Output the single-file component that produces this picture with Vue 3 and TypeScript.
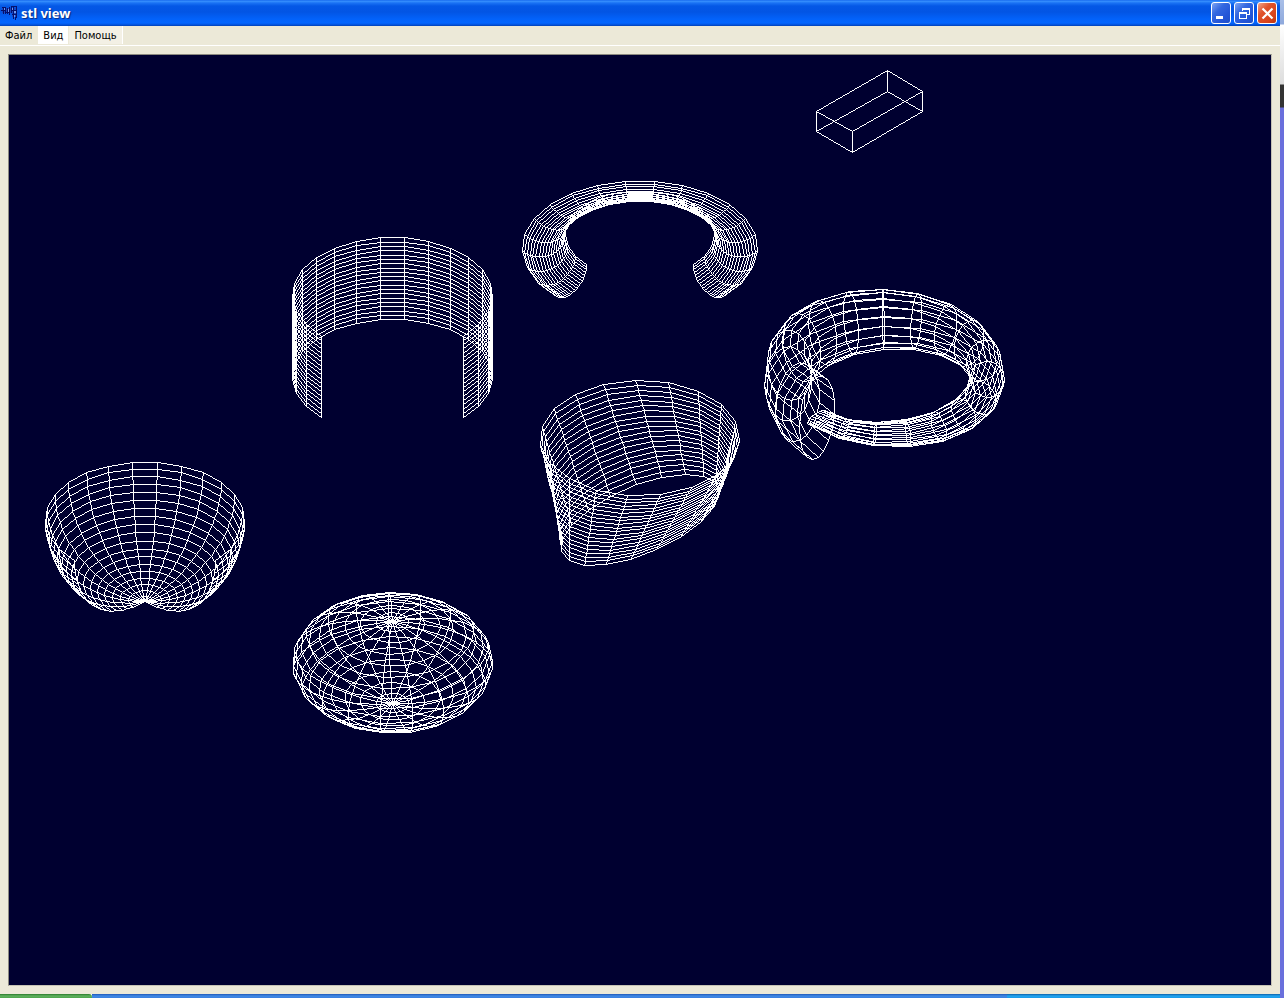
<script setup lang="ts">
type Point = [number, number]
type Surface = (u: number, v: number) => Point

// Side length of every surface grid, in nodes.
const NODES = 20
const TURN = Math.PI * 2
const COS45 = Math.SQRT1_2
const RISE = Math.sqrt(1 / 6)
const LIFT = Math.sqrt(2 / 3)

const menu: { label: string; kind: string }[] = [
  { label: 'Файл', kind: '' },
  { label: 'Вид', kind: 'active' },
  { label: 'Помощь', kind: 'raised' },
]

// Isometric projection: x runs to the front left, y to the front right, z up.
function project(origin: Point, x: number, y: number, z: number): Point {
  return [origin[0] + (y - x) * COS45, origin[1] + (x + y) * RISE - z * LIFT]
}

// One-pixel line between two points, kept as cells of a set.
function line(cells: Set<number>, a: Point, b: Point) {
  let x = Math.round(a[0])
  let y = Math.round(a[1])
  const ex = Math.round(b[0])
  const ey = Math.round(b[1])
  const dx = Math.abs(ex - x)
  const dy = -Math.abs(ey - y)
  const sx = x < ex ? 1 : -1
  const sy = y < ey ? 1 : -1
  let err = dx + dy
  for (;;) {
    cells.add(y * 4096 + x)
    if (x === ex && y === ey) break
    const e2 = err * 2
    if (e2 >= dy) {
      err += dy
      x += sx
    }
    if (e2 <= dx) {
      err += dx
      y += sy
    }
  }
}

// Joins neighbouring cells into horizontal runs.
function toPath(cells: Set<number>): string {
  const sorted = [...cells].sort((a, b) => a - b)
  let d = ''
  let i = 0
  while (i < sorted.length) {
    let n = 1
    while (sorted[i + n] === sorted[i] + n) n++
    d += `M${sorted[i] % 4096} ${Math.floor(sorted[i] / 4096)}h${n}v1h-${n}z`
    i += n
  }
  return d
}

function mesh(surface: Surface): string {
  const cells = new Set<number>()
  const last = NODES - 1
  for (let i = 0; i < NODES; i++) {
    for (let j = 0; j < NODES; j++) {
      const p = surface(i / last, j / last)
      if (i < last) line(cells, p, surface((i + 1) / last, j / last))
      if (j < last) line(cells, p, surface(i / last, (j + 1) / last))
    }
  }
  return toPath(cells)
}

function cell(column: number, row: number): Point {
  return [135.5 + column * 247.5, 35.6 + row * 142.9]
}

// Three quarters of a turn, open towards the viewer.
function openTurn(u: number): number {
  return Math.PI / 2 + u * TURN * 0.75
}

function cylinder(origin: Point): string {
  return mesh((u, v) => {
    const a = openTurn(u)
    return project(origin, 100 * Math.cos(a), 100 * Math.sin(a), 100 * v)
  })
}

function bowl(origin: Point): string {
  return mesh((u, v) => {
    const a = openTurn(u)
    const b = (v * Math.PI) / 2
    const r = 100 * Math.cos(b)
    return project(origin, r * Math.cos(a), r * Math.sin(a), -100 * Math.sin(b))
  })
}

function gutter(origin: Point): string {
  return mesh((u, v) => {
    const a = openTurn(u)
    const b = Math.PI + v * Math.PI * 0.75
    const r = 100 + 25 * Math.cos(b)
    return project(origin, r * Math.cos(a), r * Math.sin(a), 25 * Math.sin(b))
  })
}

function ellipsoid(origin: Point): string {
  return mesh((u, v) => {
    const a = u * TURN
    const b = (v - 0.5) * Math.PI
    const r = 100 * Math.cos(b)
    return project(origin, r * Math.cos(a), r * Math.sin(a), 50 * Math.sin(b))
  })
}

function funnel(origin: Point): string {
  return mesh((u, v) => {
    const a = u * TURN
    return project(origin, 100 * Math.cos(a), (50 + 50 * v) * Math.sin(a), 100 * v)
  })
}

function horn(origin: Point): string {
  return mesh((u, v) => {
    const a = u * TURN
    const b = v * TURN
    const r = 100 + (12.5 + 12.5 * u) * Math.cos(b)
    return project(origin, r * Math.cos(a), r * Math.sin(a), (6.25 + 43.75 * u) * Math.sin(b))
  })
}

function box(origin: Point): string {
  const cells = new Set<number>()
  const base: Point[] = [[0, 0], [100, 0], [100, 50], [0, 50]]
  base.forEach(([x, y], i) => {
    const [nx, ny] = base[(i + 1) % 4]
    line(cells, project(origin, x, y, 0), project(origin, nx, ny, 0))
    line(cells, project(origin, x, y, 25), project(origin, nx, ny, 25))
    line(cells, project(origin, x, y, 0), project(origin, x, y, 25))
  })
  return toPath(cells)
}

const solids: { name: string; d: string }[] = [
  { name: 'box', d: box(cell(3, 0)) },
  { name: 'gutter', d: gutter(cell(2, 1)) },
  { name: 'cylinder', d: cylinder(cell(1, 2)) },
  { name: 'horn', d: horn(cell(3, 2)) },
  { name: 'bowl', d: bowl(cell(0, 3)) },
  { name: 'funnel', d: funnel(cell(2, 3)) },
  { name: 'ellipsoid', d: ellipsoid(cell(1, 4)) },
]
</script>

<template>
  <div class="desktop">
    <div class="window">
      <header class="titlebar">
        <svg class="app-icon" width="18" height="18" viewBox="0 0 18 18" shape-rendering="crispEdges" aria-hidden="true">
          <path d="M2 4h15v5h-15zM12 9h5v4h-5z" fill="#1747c4" />
          <path d="M2 3h4v1h-4zM3 3h1v7h-1zM1 6h5v1h-5zM5 4h1v6h-1zM7 4h1v6h-1zM6 8h4v1h-4zM9 3h1v8h-1zM11 2h6v1h-6zM11 3h1v6h-1zM13 2h1v10h-1zM16 2h1v12h-1zM11 6h6v1h-6zM12 10h4v1h-4zM13 12h1v3h-1zM15 13h1v3h-1z" fill="#06106c" />
          <path d="M4 4h1v2h-1zM8 5h1v3h-1zM12 4h1v2h-1zM14 7h2v2h-2zM14 11h1v2h-1z" fill="#6f97ee" />
        </svg>
        <h1>stl view</h1>
        <button class="control" type="button" aria-label="Свернуть">
          <svg width="19" height="19" viewBox="0 0 19 19" aria-hidden="true"><path d="M4 12h7v3H4z" fill="#fff" /></svg>
        </button>
        <button class="control" type="button" aria-label="Восстановить">
          <svg width="19" height="19" viewBox="0 0 19 19" shape-rendering="crispEdges" aria-hidden="true">
            <path d="M7 4h8v7h-3v-1h2V6H8v1H7zM4 8h8v7H4zM5 10v4h6v-4z" fill="#fff" fill-rule="evenodd" />
          </svg>
        </button>
        <button class="control close" type="button" aria-label="Закрыть">
          <svg width="19" height="19" viewBox="0 0 19 19" aria-hidden="true"><path d="M4.500 4.500l10 10M14.500 4.500l-10 10" stroke="#fff" stroke-width="2.200" /></svg>
        </button>
      </header>
      <nav class="menubar">
        <button v-for="item in menu" :key="item.label" type="button" :class="item.kind">{{ item.label }}</button>
      </nav>
      <main>
        <svg class="scene" shape-rendering="crispEdges" role="img" aria-label="stl">
          <path v-for="solid in solids" :key="solid.name" :d="solid.d" fill="#fff" />
        </svg>
      </main>
    </div>
    <aside class="behind"></aside>
    <footer class="taskbar">
      <span class="start"></span>
      <span class="tasks"></span>
      <span class="tray"></span>
    </footer>
  </div>
</template>

<style>
html,
body {
  margin: 0;
  overflow: hidden;
}
</style>

<style scoped>
.desktop {
  display: grid;
  grid-template-columns: 1fr 4px;
  grid-template-rows: 1fr 4px;
  height: 100vh;
  font-family: 'DejaVu Sans Condensed', 'DejaVu Sans', sans-serif;
  font-size: 11px;
}
.window {
  display: flex;
  flex-direction: column;
  min-width: 0;
  background: #ece9d8;
}
.titlebar {
  display: flex;
  align-items: center;
  gap: 3px;
  height: 26px;
  box-sizing: border-box;
  padding-right: 3px;
  background: linear-gradient(#0a5be8 0, #3a93ff 1px, #1a72f4 3px, #0458e6 6px, #0355e4 12px, #0362fa 19px, #0366fe 23px, #0350d8 25px, #0140b0 26px);
}
.app-icon {
  flex: none;
}
h1 {
  flex: 1;
  margin: 0;
  color: #fff;
  font: bold 13px/20px 'Noto Sans', 'Open Sans', sans-serif;
  text-shadow: 1px 1px 1px #0a2a80;
}
.control {
  display: flex;
  width: 20px;
  height: 22px;
  box-sizing: border-box;
  padding: 0;
  align-items: center;
  justify-content: center;
  overflow: hidden;
  border: 1px solid #fff;
  border-radius: 3px;
  background: linear-gradient(135deg, #7ea5f4, #3468e0 35%, #2456d8 70%, #1f4fc8);
}
.control svg {
  flex: none;
}
.close {
  background: linear-gradient(135deg, #f0a68c, #e0532c 35%, #d8431b 75%, #b83610);
}
.menubar {
  display: flex;
  gap: 1px;
  height: 20px;
  box-sizing: border-box;
  padding-bottom: 1px;
  border-bottom: 1px solid #fff;
}
.menubar button {
  padding: 1px 5px 0;
  border: 0;
  background: none;
  color: #000;
  font: inherit;
  line-height: 18px;
}
.menubar .active {
  background: #fff;
}
.menubar .raised {
  border-right: 1px solid #fff;
  background: #f3f0e5;
}
main {
  display: flex;
  flex: 1;
  min-height: 0;
  margin: 8px;
  border: 1px solid #8c8a80;
  border-right-color: #c6c3b4;
  border-bottom-color: #c6c3b4;
  background: #000030;
}
.scene {
  flex: 1;
  min-width: 0;
  height: 100%;
}
.behind {
  grid-row: 1 / 3;
  grid-column: 2;
  background: linear-gradient(#a9bfe8 0, #8fa9dc 24px, #fff 25px, #dcdcdc 84px, #333 85px, #333 107px, #6a6fdc 108px, #6a70dc);
}
.taskbar {
  display: flex;
}
.start {
  width: 92px;
  border-radius: 0 3px 0 0;
  background: linear-gradient(#2a7a2c, #5fb25e 2px, #4da44c);
}
.tasks {
  flex: 1;
  background: linear-gradient(#2058b8, #4089e4 2px, #3a80e0);
}
.tray {
  width: 273px;
  background: linear-gradient(#0c60a8, #24a6f0 2px, #1a9ae8);
}
</style>
